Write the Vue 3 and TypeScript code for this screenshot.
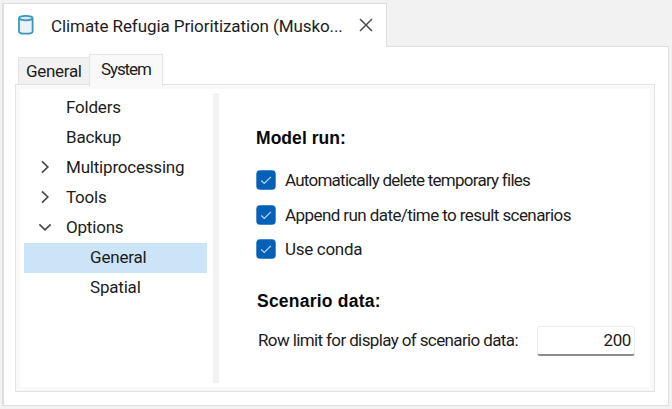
<script setup lang="ts">
import { ref } from 'vue'

interface TreeNode {
  label: string
  level: number
  state?: 'collapsed' | 'expanded'
}

const tabs = ['General', 'System']
const activeTab = ref('System')

const nodes: TreeNode[] = [
  { label: 'Folders', level: 0 },
  { label: 'Backup', level: 0 },
  { label: 'Multiprocessing', level: 0, state: 'collapsed' },
  { label: 'Tools', level: 0, state: 'collapsed' },
  { label: 'Options', level: 0, state: 'expanded' },
  { label: 'General', level: 1 },
  { label: 'Spatial', level: 1 },
]
const selected = ref(5)

const options = ref([
  { label: 'Automatically delete temporary files', cls: 'tight', checked: true },
  { label: 'Append run date/time to result scenarios', cls: 'snug', checked: true },
  { label: 'Use conda', cls: 'loose', checked: true },
])
const rowLimit = ref('200')
</script>

<template>
  <div class="window">
    <header class="doc-bar">
      <div class="doc-tab">
        <svg class="db-icon" width="18" height="22" viewBox="0 0 18 22">
          <path d="M2 4.2v13.2c0 1.3 3 2.3 6.8 2.3s6.8-1 6.8-2.3V4.2" fill="#e9f2f7" stroke="#3f96b8" stroke-width="1.8" />
          <ellipse cx="8.8" cy="4.1" rx="6.8" ry="2.3" fill="#d5eaf2" stroke="#3f96b8" stroke-width="1.8" />
        </svg>
        <span class="doc-title">Climate Refugia Prioritization (Musko...</span>
        <svg class="close" width="14" height="14" viewBox="0 0 14 14">
          <path d="M1 1l12 12M13 1L1 13" fill="none" stroke="#4c4c4c" stroke-width="1.5" />
        </svg>
      </div>
      <div class="doc-rest"></div>
    </header>
    <main class="doc-body">
      <nav class="tabs">
        <div
          v-for="t in tabs"
          :key="t"
          class="tab"
          :class="{ active: t === activeTab }"
          @click="activeTab = t"
        >{{ t }}</div>
      </nav>
      <section class="panel">
        <ul class="tree">
          <li
            v-for="(n, i) in nodes"
            :key="i"
            class="node"
            :class="{ child: n.level === 1, selected: i === selected }"
            @click="selected = i"
          >
            <span class="chevron">
              <svg v-if="n.state === 'collapsed'" width="14" height="14" viewBox="0 0 14 14">
                <path d="M4 1.4L9.8 7L4 12.6" fill="none" stroke="#484848" stroke-width="1.7" />
              </svg>
              <svg v-else-if="n.state === 'expanded'" width="14" height="14" viewBox="0 0 14 14">
                <path d="M1.4 4.4L7 9.8L12.6 4.4" fill="none" stroke="#484848" stroke-width="1.7" />
              </svg>
            </span>
            <span>{{ n.label }}</span>
          </li>
        </ul>
        <div class="splitter"></div>
        <div class="form">
          <h2 class="heading">Model run:</h2>
          <label v-for="o in options" :key="o.label" class="option" @click="o.checked = !o.checked">
            <svg width="20" height="20" viewBox="0 0 20 20">
              <rect x="0.3" y="0.3" width="19.4" height="19.4" rx="3.8" fill="#0560b8" />
              <path v-if="o.checked" d="M5.2 10.5L8.3 13.5L14.9 6.8" fill="none" stroke="#b9d6f0" stroke-width="1.2" />
            </svg>
            <span :class="o.cls">{{ o.label }}</span>
          </label>
          <h2 class="heading second">Scenario data:</h2>
          <div class="field">
            <span class="field-label">Row limit for display of scenario data:</span>
            <input v-model="rowLimit" class="field-input" type="text" />
          </div>
        </div>
      </section>
    </main>
  </div>
</template>

<style>
body {
  background: #f2f2f2;
}
</style>

<style scoped>
* {
  box-sizing: border-box;
}
.window {
  height: 409px;
  padding: 3px 3px 3px 2px;
  display: flex;
  flex-direction: column;
  background: #f2f2f2;
  color: #1c1c1c;
  font: 17px Roboto, "Liberation Sans", sans-serif;
}
.doc-bar {
  display: flex;
  height: 44px;
  flex: none;
}
.doc-tab {
  width: 385px;
  display: flex;
  align-items: center;
  padding-left: 13px;
  background: #fff;
  border: 1px solid #dedede;
  border-width: 1px 1px 0 2px;
}
.db-icon {
  margin-top: -1px;
}
.doc-title {
  width: 307px;
  margin-left: 16px;
  padding-top: 1px;
  letter-spacing: -0.09px;
  white-space: nowrap;
}
.close {
  margin: 0 0 1px 1px;
}
.doc-rest {
  flex: 1;
  border-bottom: 1px solid #dcdcdc;
}
.doc-body {
  flex: 1;
  background: #fff;
  border: 1px solid #dedede;
  border-width: 0 1px 1px 2px;
  padding: 7px 14px 14px 12px;
  display: flex;
  flex-direction: column;
  min-height: 0;
}
.tabs {
  display: flex;
  align-items: flex-end;
  padding-left: 2px;
  height: 31px;
  flex: none;
}
.tab {
  width: 72px;
  height: 28px;
  display: flex;
  align-items: center;
  padding: 0 0 1px 7px;
  border: 1px solid #e4e4e4;
  border-bottom: 0;
  background: #f1f1f1;
  letter-spacing: -0.3px;
}
.tab.active {
  width: 74px;
  height: 32px;
  margin: 0 0 -1px -1px;
  padding: 0 0 3px 11px;
  background: #f9f9f9;
  letter-spacing: -1.1px;
  position: relative;
}
.panel {
  flex: 1;
  display: flex;
  border: 4px solid #f9f9f9;
  outline: 1px solid #e2e2e2;
  padding: 4px 0 4px 4px;
  min-height: 0;
}
.tree {
  list-style: none;
  margin: 0;
  padding: 0;
  width: 183px;
}
.node {
  height: 30px;
  display: flex;
  align-items: center;
  padding-left: 14px;
  padding-bottom: 2px;
  letter-spacing: -0.2px;
}
.node.child {
  padding-left: 38px;
}
.node.selected {
  background: #cce4f7;
}
.chevron {
  width: 28px;
  height: 14px;
  flex: none;
}
.chevron svg {
  display: block;
}
.splitter {
  width: 6px;
  margin-left: 6px;
  background: #f2f2f2;
}
.form {
  flex: 1;
  padding: 34px 0 0 37px;
}
.heading {
  margin: 0 0 14px;
  height: 22px;
  font: bold 17.5px/23px "Liberation Sans", Arial, sans-serif;
  letter-spacing: 0.05px;
  color: #080808;
}
.option {
  display: flex;
  align-items: center;
  height: 34.5px;
  gap: 9px;
}
.option svg {
  flex: none;
}
.tight {
  letter-spacing: -0.75px;
}
.snug {
  letter-spacing: -0.58px;
}
.loose {
  letter-spacing: -0.3px;
}
.heading.second {
  margin: 23px 0 14px 1px;
  letter-spacing: 0.22px;
}
.field {
  display: flex;
  align-items: center;
  height: 30px;
}
.field-label {
  width: 281px;
  padding: 0 0 2px 2px;
  letter-spacing: -0.62px;
  white-space: nowrap;
}
.field-input {
  width: 98px;
  height: 30px;
  padding: 0 3px 1px 0;
  border: 1px solid #ebebeb;
  border-bottom: 2px solid #8c8c8c;
  border-radius: 3px;
  background: #fff;
  color: #1c1c1c;
  font: inherit;
  letter-spacing: -0.4px;
  text-align: right;
  outline: none;
}
</style>
